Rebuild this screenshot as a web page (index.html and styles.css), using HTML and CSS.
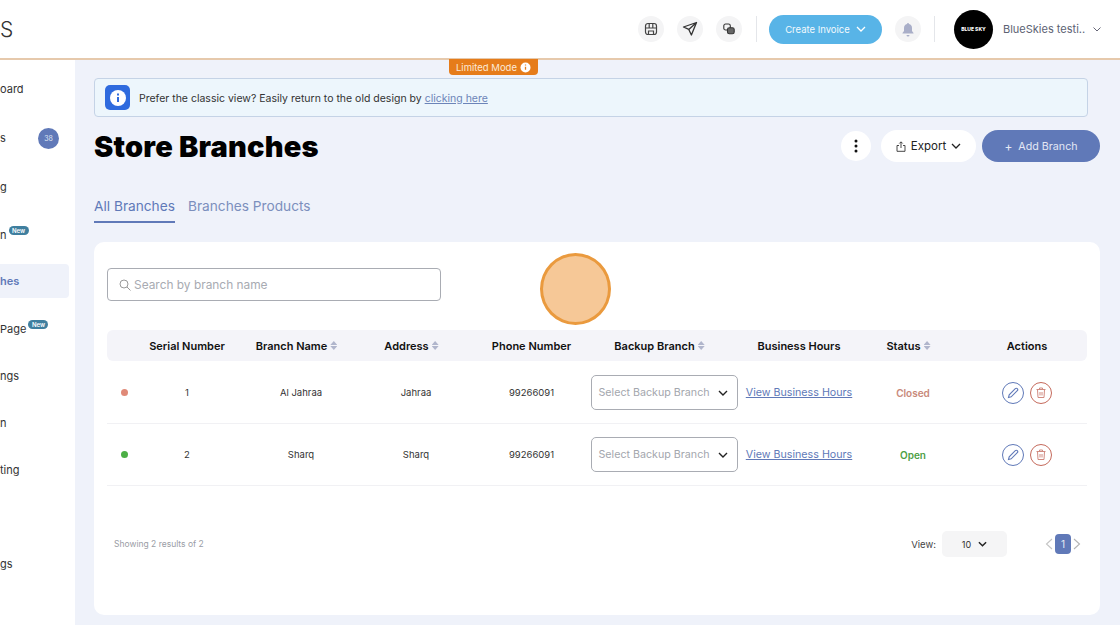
FILE: index.html
```html
<!DOCTYPE html>
<html>
<head>
	<title>Store Branches</title>
	<meta charset="UTF-8">
	<link rel="stylesheet" href="styles.css">
</head>
<body>
	<div class="page">
		<header class="topbar">
			<div class="logo">S</div>
			<div class="topbar-right">
				<span class="round-icon">
					<svg width="14" height="14" viewBox="0 0 14 14" fill="none" stroke="#444" stroke-width="1.2"><rect x="1.5" y="1.5" width="11" height="11" rx="2.5"/><path d="M1.5 6h11M5.2 1.5V6M8.8 1.5V6M4.5 12.5V9h5v3.5"/></svg>
				</span>
				<span class="round-icon">
					<svg width="16" height="16" viewBox="0 0 16 16" fill="none" stroke="#333" stroke-width="1.3" stroke-linejoin="round"><path d="M14.5 1.5 1.5 6l5.3 2.4 2.6 5.6zM14.5 1.5 6.8 8.4"/></svg>
				</span>
				<span class="round-icon">
					<svg width="12" height="12" viewBox="0 0 12 12" fill="none" stroke="#333" stroke-width="1.1"><rect x=".8" y="1" width="6.500" height="6" rx="1.800"/><rect x="4.500" y="4.800" width="6.700" height="6" rx="1.800" fill="#666"/></svg>
				</span>
				<span class="bar-divider"></span>
				<button class="create-btn">Create Invoice
					<svg width="10" height="6" viewBox="0 0 10 6" fill="none" stroke="#fff" stroke-width="1.3"><path d="M1 1l4 4 4-4"/></svg>
				</button>
				<span class="round-icon bell">
					<svg width="14" height="15" viewBox="0 0 14 15" fill="#a9aec8"><path d="M7 1a1 1 0 0 1 1 1c2 .5 3 2 3 4v3l1.500 2v.500H1.500V11L3 9V6c0-2 1-3.500 3-4a1 1 0 0 1 1-1zM5.500 13h3a1.500 1.500 0 0 1-3 0z"/></svg>
				</span>
				<span class="bar-divider second"></span>
				<span class="avatar">BLUE SKY</span>
				<span class="user-name">BlueSkies testi..</span>
				<svg class="user-chevron" width="8" height="5" viewBox="0 0 8 5" fill="none" stroke="#667" stroke-width="1"><path d="M.5.500 4 4 7.500.500"/></svg>
			</div>
		</header>

		<div class="limited-badge">Limited Mode
			<svg width="11" height="11" viewBox="0 0 11 11"><circle cx="5.500" cy="5.500" r="5" fill="#fff"/><path d="M5.500 4.800v3M5.500 2.600v1" stroke="#e67c1a" stroke-width="1.300"/></svg>
		</div>

		<div class="layout">
			<nav class="sidebar">
				<div class="nav-item tall">oard</div>
				<div class="nav-item tall">s<span class="count">38</span></div>
				<div class="nav-item tall">g</div>
				<div class="nav-item">n<span class="new-tag">New</span></div>
				<div class="nav-item active">hes</div>
				<div class="nav-item">Page<span class="new-tag">New</span></div>
				<div class="nav-item">ngs</div>
				<div class="nav-item">n</div>
				<div class="nav-item">ting</div>
				<div class="nav-item"></div>
				<div class="nav-item">gs</div>
			</nav>

			<main class="content">
				<div class="notice">
					<span class="notice-icon">
						<svg width="16" height="16" viewBox="0 0 16 16"><circle cx="8" cy="8" r="8" fill="#fff"/><path d="M8 7v5M8 3.500v2" stroke="#2f6bde" stroke-width="2"/></svg>
					</span>
					<span class="notice-text">Prefer the classic view? Easily return to the old design by <a class="notice-link">clicking here</a></span>
				</div>

				<div class="title-row">
					<h1>Store Branches</h1>
					<div class="title-actions">
						<button class="more-btn">
							<svg width="4" height="14" viewBox="0 0 4 14" fill="#111"><circle cx="2" cy="2" r="1.500"/><circle cx="2" cy="7" r="1.500"/><circle cx="2" cy="12" r="1.500"/></svg>
						</button>
						<button class="export-btn">
							<svg width="10" height="11" viewBox="0 0 10 11" fill="none" stroke="#333" stroke-width=".9"><path d="M3 4.500H1v5.800h8V4.500H7M5 7V1M3.300 2.500 5 .8l1.700 1.700"/></svg>
							Export
							<svg width="10" height="6" viewBox="0 0 10 6" fill="none" stroke="#222" stroke-width="1.300"><path d="M1 1l4 4 4-4"/></svg>
						</button>
						<button class="add-btn"><span class="plus">+</span>Add Branch</button>
					</div>
				</div>

				<div class="tabs">
					<span class="tab current">All Branches</span>
					<span class="tab">Branches Products</span>
				</div>

				<section class="card">
					<div class="search">
						<svg width="12" height="12" viewBox="0 0 12 12" fill="none" stroke="#9a9a9a" stroke-width="1"><circle cx="5" cy="5" r="4"/><path d="M8 8l3.500 3.500"/></svg>
						<span>Search by branch name</span>
					</div>

					<div class="grid-row head">
						<span></span>
						<span>Serial Number</span>
						<span class="sortable">Branch Name<i class="sort"></i></span>
						<span class="sortable">Address<i class="sort"></i></span>
						<span>Phone Number</span>
						<span class="sortable">Backup Branch<i class="sort"></i></span>
						<span>Business Hours</span>
						<span class="sortable">Status<i class="sort"></i></span>
						<span>Actions</span>
					</div>

					<div class="grid-row body-row">
						<span class="dot red"></span>
						<span>1</span>
						<span>Al Jahraa</span>
						<span>Jahraa</span>
						<span>99266091</span>
						<span class="backup-select">Select Backup Branch
							<svg width="10" height="6" viewBox="0 0 10 6" fill="none" stroke="#222" stroke-width="1.400"><path d="M1 1l4 4 4-4"/></svg>
						</span>
						<a class="hours-link">View Business Hours</a>
						<span class="status closed">Closed</span>
						<span class="actions">
							<span class="action edit"><svg width="12" height="12" viewBox="0 0 12 12" fill="none" stroke="#6079b8" stroke-width="1.100"><path d="M1.500 10.500 2.200 7.800 8.300 1.700a1.200 1.200 0 0 1 2 2L4.200 9.800z"/></svg></span>
							<span class="action remove"><svg width="10" height="11" viewBox="0 0 10 11" fill="none" stroke="#d08a80" stroke-width="1"><path d="M.5 2.500h9M3.500 2.500V1h3v1.500M1.500 2.500l.5 8h6l.5-8M4 5v3.500M6 5v3.500"/></svg></span>
						</span>
					</div>

					<div class="grid-row body-row">
						<span class="dot green"></span>
						<span>2</span>
						<span>Sharq</span>
						<span>Sharq</span>
						<span>99266091</span>
						<span class="backup-select">Select Backup Branch
							<svg width="10" height="6" viewBox="0 0 10 6" fill="none" stroke="#222" stroke-width="1.400"><path d="M1 1l4 4 4-4"/></svg>
						</span>
						<a class="hours-link">View Business Hours</a>
						<span class="status open">Open</span>
						<span class="actions">
							<span class="action edit"><svg width="12" height="12" viewBox="0 0 12 12" fill="none" stroke="#6079b8" stroke-width="1.100"><path d="M1.500 10.500 2.200 7.800 8.300 1.700a1.200 1.200 0 0 1 2 2L4.200 9.800z"/></svg></span>
							<span class="action remove"><svg width="10" height="11" viewBox="0 0 10 11" fill="none" stroke="#d08a80" stroke-width="1"><path d="M.5 2.500h9M3.500 2.500V1h3v1.500M1.500 2.500l.5 8h6l.5-8M4 5v3.500M6 5v3.500"/></svg></span>
						</span>
					</div>

					<div class="table-foot">
						<span class="results">Showing 2 results of 2</span>
						<div class="pager">
							<span class="view-label">View:</span>
							<span class="view-select">10
								<svg width="9" height="6" viewBox="0 0 10 6" fill="none" stroke="#222" stroke-width="1.600"><path d="M1 1l4 4 4-4"/></svg>
							</span>
							<span class="pages">
								<svg width="8" height="12" viewBox="0 0 8 12" fill="none" stroke="#c4c4c4" stroke-width="1.100"><path d="M7 1 1.500 6 7 11"/></svg>
								<span class="page-num">1</span>
								<svg width="8" height="12" viewBox="0 0 8 12" fill="none" stroke="#b4b4b4" stroke-width="1.100"><path d="M1 1l5.500 5L1 11"/></svg>
							</span>
						</div>
					</div>
				</section>
			</main>
		</div>

		<div class="click-marker"></div>
	</div>
</body>
</html>
```

FILE: styles.css
```css
* {
	margin: 0;
	padding: 0;
	box-sizing: border-box;
}

body {
	font-family: Inter, "Liberation Sans", sans-serif;
	color: #222;
	background: #eff2fa;
	overflow: hidden;
}

button {
	font-family: inherit;
	border: none;
}

.page {
	position: relative;
	width: 1120px;
	height: 625px;
	overflow: hidden;
}

/* top bar */
.topbar {
	display: flex;
	align-items: center;
	height: 60px;
	background: #fff;
	border-bottom: 2px solid #e6c9ac;
}

.logo {
	font-size: 21px;
	font-weight: 300;
	color: #333;
}

.topbar-right {
	display: flex;
	align-items: center;
	margin-left: auto;
	padding-right: 19px;
}

.round-icon {
	display: flex;
	align-items: center;
	justify-content: center;
	width: 26px;
	height: 26px;
	margin-right: 13px;
	border-radius: 50%;
	background: #f4f4f5;
}

.bar-divider {
	width: 1px;
	height: 26px;
	margin: 0 12px 0 1px;
	background: #e4e6ea;
}

.bar-divider.second {
	margin: 0 19px 0 0;
}

.create-btn {
	display: flex;
	align-items: center;
	justify-content: center;
	gap: 6px;
	width: 113px;
	height: 29px;
	margin-right: 13px;
	border-radius: 15px;
	background: #58b4e7;
	color: #f2f9fd;
	font-size: 9.500px;
}

.avatar {
	display: flex;
	align-items: center;
	justify-content: center;
	width: 39px;
	height: 39px;
	margin-right: 10px;
	border-radius: 50%;
	background: #000;
	color: #fff;
	font-size: 5px;
	font-weight: 800;
}

.user-name {
	width: 90px;
	font-size: 11px;
	color: #5c6273;
	white-space: nowrap;
}

.limited-badge {
	position: absolute;
	top: 59px;
	left: 449px;
	display: flex;
	align-items: center;
	gap: 3px;
	width: 89px;
	height: 16px;
	padding-left: 7px;
	border-radius: 0 0 4px 4px;
	background: #e67c1a;
	color: #fbe9d8;
	font-size: 9.500px;
}

/* sidebar */
.layout {
	display: flex;
	height: 565px;
}

.sidebar {
	flex: 0 0 75px;
	padding: 3.500px 6px 0 0;
	background: #fff;
}

.nav-item {
	position: relative;
	display: flex;
	align-items: center;
	height: 47px;
	padding-top: 2px;
	font-size: 11px;
	color: #333;
	white-space: nowrap;
}

.nav-item.tall {
	height: 49px;
}

.nav-item.active {
	height: 34px;
	margin: 6px 0 7px;
	padding-top: 0;
	border-radius: 0 4px 4px 0;
	background: #eff2fa;
	color: #6079b8;
	font-weight: 600;
}

.count {
	position: absolute;
	left: 38px;
	display: flex;
	align-items: center;
	justify-content: center;
	width: 21px;
	height: 21px;
	border-radius: 50%;
	background: #6079b8;
	color: #dfe5f3;
	font-size: 7px;
}

.new-tag {
	align-self: center;
	margin: -9px 0 0 2px;
	padding: 1px 3.500px;
	border-radius: 6px;
	background: #3f7f9f;
	color: #fff;
	font-size: 6px;
	font-weight: 600;
}

/* main column */
.content {
	flex: 1;
	padding: 18px 20px 0 19px;
}

.notice {
	display: flex;
	align-items: center;
	gap: 9px;
	width: 994px;
	height: 39px;
	padding-left: 10px;
	border: 1px solid #c5d3e6;
	border-radius: 4px;
	background: #edf6fc;
	font-size: 10.500px;
	color: #333;
}

.notice-text {
	padding-top: 1px;
}

.notice-icon {
	display: flex;
	align-items: center;
	justify-content: center;
	width: 25px;
	height: 25px;
	border-radius: 5px;
	background: #2f6bde;
}

.notice-link {
	color: #6c84b8;
	text-decoration: underline;
}

.title-row {
	display: flex;
	align-items: center;
	justify-content: space-between;
	height: 44px;
	margin-top: 7px;
}

h1 {
	font-size: 29px;
	font-weight: 900;
	letter-spacing: 0.2px;
	color: #000;
}

.title-actions {
	display: flex;
	align-items: center;
	gap: 10px;
}

.more-btn {
	display: flex;
	align-items: center;
	justify-content: center;
	width: 30px;
	height: 30px;
	border-radius: 50%;
	background: #fff;
}

.export-btn {
	display: flex;
	align-items: center;
	justify-content: center;
	gap: 5px;
	width: 95px;
	height: 32px;
	margin-right: -4px;
	border-radius: 16px;
	background: #fff;
	color: #222;
	font-size: 11.500px;
}

.add-btn {
	display: flex;
	align-items: center;
	justify-content: center;
	gap: 6px;
	width: 118px;
	height: 32px;
	border-radius: 16px;
	background: #6079b8;
	color: #e3e8f5;
	font-size: 10.700px;
}

.plus {
	font-size: 12px;
}

.tabs {
	display: flex;
	gap: 13px;
	height: 34px;
	margin-top: 21px;
	margin-bottom: 19px;
}

.tab {
	height: 34px;
	padding-top: 9px;
	font-size: 13.700px;
	color: #7c8fbd;
}

.tab.current {
	border-bottom: 2px solid #6079b8;
	color: #6079b8;
}

/* branches card */
.card {
	height: 373px;
	padding: 26px 13px 0;
	border-radius: 10px;
	background: #fff;
}

.search {
	display: flex;
	align-items: center;
	gap: 3px;
	width: 334px;
	height: 33px;
	padding-left: 11px;
	border: 1px solid #a9acb3;
	border-radius: 4px;
	font-size: 11.900px;
	color: #a8abb2;
}

.grid-row {
	display: grid;
	grid-template-columns: 23px 114px 114px 116px 115px 150px 120px 108px 120px;
	align-items: center;
	justify-items: center;
	font-size: 9.500px;
	color: #333;
}

.grid-row.head {
	height: 31px;
	margin-top: 29px;
	margin-bottom: 1px;
	border-radius: 6px;
	background: #f4f4f9;
	font-size: 11px;
	font-weight: 600;
	color: #111;
}

.sortable {
	display: flex;
	align-items: center;
	gap: 3px;
	margin-right: 9px;
}

.sort {
	position: relative;
	display: block;
	width: 7px;
	height: 9px;
}

.sort::before,
.sort::after {
	content: "";
	position: absolute;
	left: 0;
	width: 7px;
	height: 4px;
	background: #b0b5cc;
}

.sort::before {
	top: 0;
	clip-path: polygon(50% 0, 100% 100%, 0 100%);
}

.sort::after {
	bottom: 0;
	clip-path: polygon(0 0, 100% 0, 50% 100%);
}

.body-row {
	height: 62px;
	border-bottom: 1px solid #f1f1f4;
}

.dot {
	width: 7px;
	height: 7px;
	margin-left: 11px;
	border-radius: 50%;
}

.dot.red {
	background: #e08a78;
}

.dot.green {
	background: #4caf45;
}

.backup-select {
	display: flex;
	align-items: center;
	justify-content: space-between;
	width: 147px;
	height: 35px;
	padding: 0 9px 0 7px;
	border: 1px solid #a9acb3;
	border-radius: 5px;
	font-size: 10.700px;
	color: #a3a6ad;
	white-space: nowrap;
}

.hours-link {
	font-size: 10.700px;
	color: #6079b8;
	text-decoration: underline;
	white-space: nowrap;
}

.status {
	font-size: 10px;
	font-weight: 600;
}

.status.closed {
	color: #c8897a;
}

.status.open {
	color: #4da044;
}

.actions {
	display: flex;
	gap: 6px;
}

.action {
	display: flex;
	align-items: center;
	justify-content: center;
	width: 22px;
	height: 22px;
	border-radius: 50%;
	border: 1px solid #6079b8;
}

.action.remove {
	border-color: #c56a5c;
}

.table-foot {
	display: flex;
	align-items: center;
	justify-content: space-between;
	margin-top: 45px;
	padding: 0 6px 0 7px;
}

.results {
	font-size: 8.500px;
	color: #9a9da5;
}

.pager {
	display: flex;
	align-items: center;
}

.view-label {
	margin-right: 6px;
	font-size: 9.500px;
	color: #444;
}

.view-select {
	display: flex;
	align-items: center;
	justify-content: center;
	gap: 7px;
	width: 65px;
	height: 26px;
	margin-right: 38px;
	border-radius: 5px;
	background: #f5f5f6;
	font-size: 9px;
	color: #333;
}

.pages {
	display: flex;
	align-items: center;
	gap: 2px;
}

.page-num {
	display: flex;
	align-items: center;
	justify-content: center;
	width: 16px;
	height: 20px;
	border-radius: 4px;
	background: #6079b8;
	color: #e8ecf6;
	font-size: 10px;
}

/* click marker from the screen recording */
.click-marker {
	position: absolute;
	top: 253px;
	left: 540px;
	width: 71px;
	height: 72px;
	border: 3px solid #ea9a3e;
	border-radius: 50%;
	background: #f6c897;
}
```
